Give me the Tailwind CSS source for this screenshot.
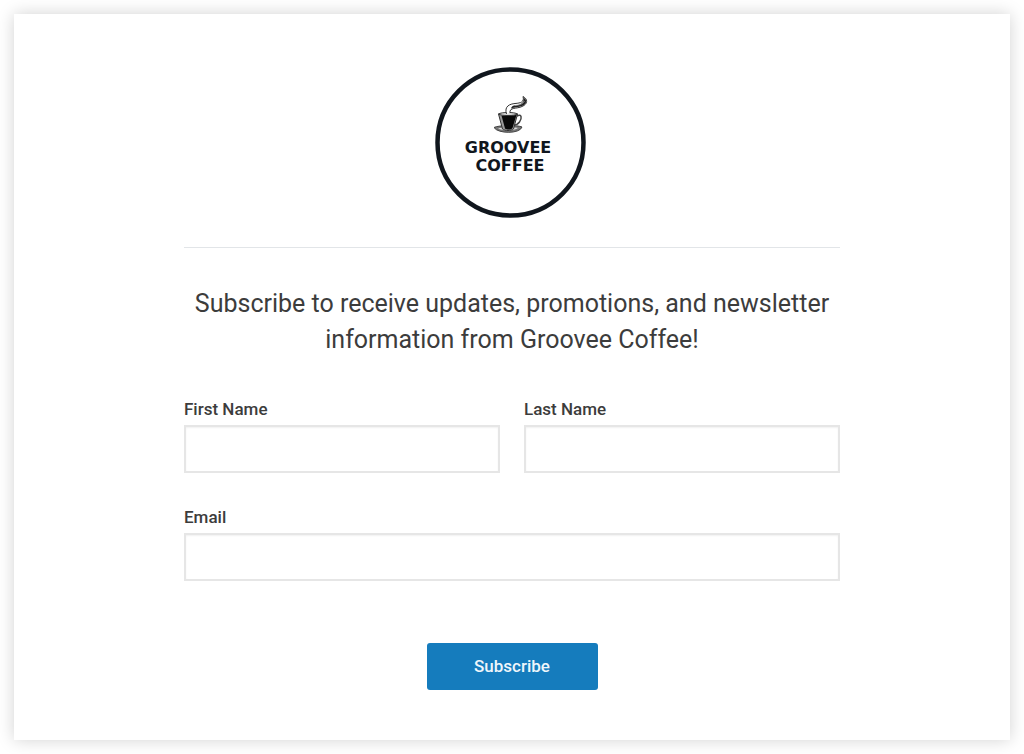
<!DOCTYPE html>
<html lang="en">
<head>
    <meta charset="UTF-8">
    <meta name="viewport" content="width=device-width, initial-scale=1.0">
    <title>Groovee Coffee</title>
    <script src="https://cdn.jsdelivr.net/npm/@tailwindcss/browser@4"></script>
</head>
<body class="bg-white p-3.5 font-['Roboto',sans-serif] text-[#3c3c3c]">

    <main class="bg-white px-6 pt-[53px] pb-[50px] shadow-[0_0_16px_rgba(0,0,0,0.18)]">
        <div class="mx-auto max-w-[656px]">

            <!-- Logo -->
            <svg class="mx-auto block size-[152px] overflow-visible" viewBox="0 0 152 152" role="img" aria-label="Groovee Coffee">
                <circle cx="74.500" cy="75.500" r="73" fill="#fff" stroke="#10161d" stroke-width="4.500"/>
                <!-- Saucer -->
                <path d="M58 60.500C63 58 82 58 86 60C84 67 62 67 58 60.500Z" fill="#777" stroke="#444" stroke-width="1"/>
                <path d="M62 61.500C66 60 79 60 82 61C78 64 66 64 62 61.500Z" fill="#ddd"/>
                <!-- Cup -->
                <path d="M81 49C86 46 86 52 83.500 55C82 57 80 58 78 58" fill="none" stroke="#444" stroke-width="1.500"/>
                <path d="M62.500 47L66.500 62C69 64 75 64 77.500 62L81.500 47Z" fill="#999" stroke="#333" stroke-width="1"/>
                <path d="M65.500 48.500L69 61.500C71 63 75 63 76.500 61L80.500 48Z" fill="#080808"/>
                <path d="M62.500 47C65 45 79 45 81.500 47C79 49 65 49 62.500 47Z" fill="#ddd" stroke="#333" stroke-width="1"/>
                <!-- Steam -->
                <path d="M70.500 47C68 39 74 37 79 36.500C85 36 88.500 35 87 29.500C92 32 92 37 86 39.500C81 42 73 40 74 46" fill="#fff" stroke="#333" stroke-width="1"/>
                <path d="M78 38.500C84 38 88.500 36.500 87.500 30.500C91.500 33 91 37 86 39C82 40.500 79 40 75 41.500C75.500 40 76 39 78 38.500Z" fill="#222"/>
                <path d="M79 38.500C84 38 87 37 88.500 34" fill="none" stroke="#aaa" stroke-width="0.700"/>
                <g fill="#10161d" text-anchor="middle" class="font-['DejaVu_Sans',sans-serif] text-[16px] font-bold">
                    <text x="72" y="86">GROOVEE</text>
                    <text x="74" y="104">COFFEE</text>
                </g>
            </svg>

            <hr class="mt-7 border-t border-[#e2e5e8]">

            <h1 class="mt-[38px] text-center text-[25px] leading-9">Subscribe to receive updates, promotions, and newsletter information from Groovee Coffee!</h1>

            <form class="mt-[39px] grid grid-cols-1 gap-x-6 gap-y-8 sm:grid-cols-2" onsubmit="event.preventDefault()">
                <div>
                    <label for="firstName" class="mb-1 block text-[17px] leading-6 font-medium">First Name</label>
                    <input type="text" id="firstName" class="block h-12 w-full border-2 border-[#e6e6e6] px-3 shadow-[inset_0_1px_2px_rgba(0,0,0,0.06)]">
                </div>
                <div>
                    <label for="lastName" class="mb-1 block text-[17px] leading-6 font-medium">Last Name</label>
                    <input type="text" id="lastName" class="block h-12 w-full border-2 border-[#e6e6e6] px-3 shadow-[inset_0_1px_2px_rgba(0,0,0,0.06)]">
                </div>
                <div class="sm:col-span-2">
                    <label for="email" class="mb-1 block text-[17px] leading-6 font-medium">Email</label>
                    <input type="email" id="email" class="block h-12 w-full border-2 border-[#e6e6e6] px-3 shadow-[inset_0_1px_2px_rgba(0,0,0,0.06)]">
                </div>
                <div class="mt-[30px] text-center sm:col-span-2">
                    <button type="submit" class="h-[47px] w-[171px] rounded-[3px] bg-[#157cbd] text-[17px] font-medium text-[#eef6fb]">Subscribe</button>
                </div>
            </form>
        </div>
    </main>

</body>
</html>
